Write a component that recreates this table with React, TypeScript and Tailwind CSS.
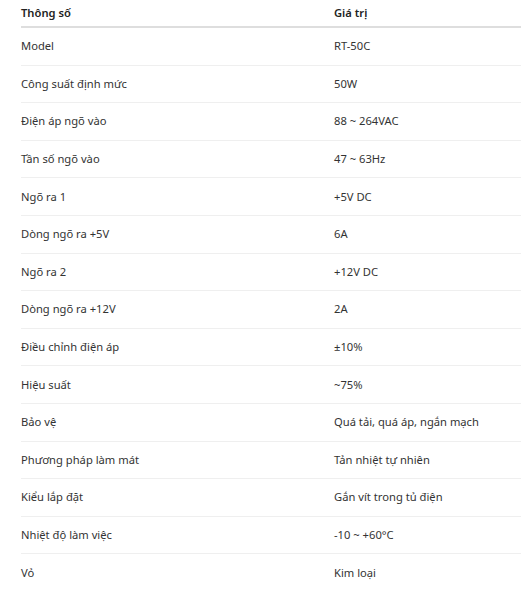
const specs: [string, string][] = [
  ['Model', 'RT-50C'],
  ['Công suất định mức', '50W'],
  ['Điện áp ngõ vào', '88 ~ 264VAC'],
  ['Tần số ngõ vào', '47 ~ 63Hz'],
  ['Ngõ ra 1', '+5V DC'],
  ['Dòng ngõ ra +5V', '6A'],
  ['Ngõ ra 2', '+12V DC'],
  ['Dòng ngõ ra +12V', '2A'],
  ['Điều chỉnh điện áp', '±10%'],
  ['Hiệu suất', '~75%'],
  ['Bảo vệ', 'Quá tải, quá áp, ngắn mạch'],
  ['Phương pháp làm mát', 'Tản nhiệt tự nhiên'],
  ['Kiểu lắp đặt', 'Gắn vít trong tủ điện'],
  ['Nhiệt độ làm việc', '-10 ~ +60°C'],
  ['Vỏ', 'Kim loại'],
];

export default function App() {
  return (
    <div className="bg-white pl-[21px] font-['Noto_Sans',sans-serif] text-[11.2px] text-[#333]">
      <table className="w-full border-collapse text-left">
        <thead>
          <tr className="border-b-2 border-[#dedede]">
            <th className="w-[313px] pt-[5px] pb-[5px] font-semibold leading-4 text-[#222]">Thông số</th>
            <th className="pt-[5px] pb-[5px] font-semibold leading-4 text-[#222]">Giá trị</th>
          </tr>
        </thead>
        <tbody>
          {specs.map(([k, v], i) => (
            <tr key={k} className={i < specs.length - 1 ? 'border-b border-[#efefef]' : ''}>
              <td className="py-[10.3px] leading-4">{k}</td>
              <td className="py-[10.3px] leading-4">{v}</td>
            </tr>
          ))}
        </tbody>
      </table>
    </div>
  );
}
